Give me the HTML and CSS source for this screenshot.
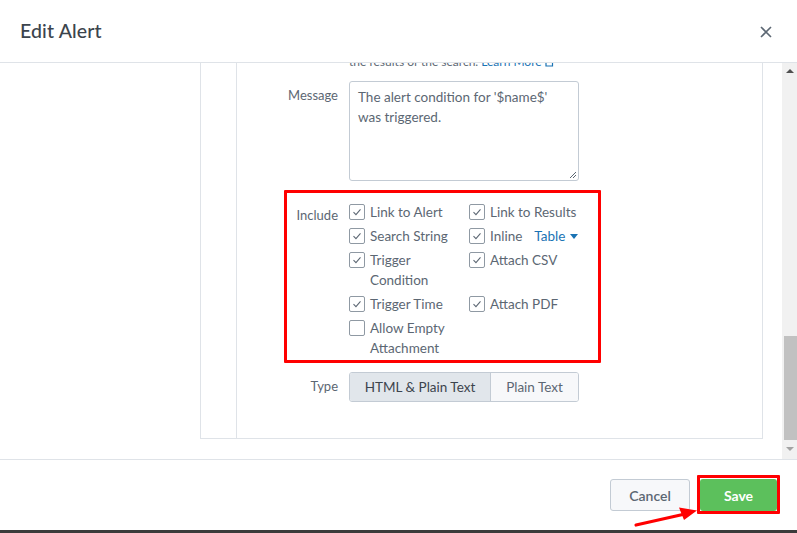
FILE: index.html
```html
<!DOCTYPE html>
<html>
<head>
<meta charset="utf-8">
<link rel="stylesheet" href="styles.css">
</head>
<body>
<div class="modal">
  <header class="header">
    <h1 class="title">Edit Alert</h1>
    <svg class="close" width="12" height="12" viewBox="0 0 12 12"><path d="M1 1 L11 11 M11 1 L1 11" stroke="#5c6773" stroke-width="1.6" fill="none"/></svg>
  </header>
  <div class="body">
    <div class="content">
      <div class="panel">
        <div class="gutter"></div>
        <div class="form">
          <div class="help-row">
            <div class="label"></div>
            <div class="help">the results of the search. <span class="link">Learn More <svg class="ext" width="9" height="9" viewBox="0 0 9 9"><path d="M1 1.5 H7.5 V8 H1 Z" stroke="#1a73b4" stroke-width="1.2" fill="none"/></svg></span></div>
          </div>
          <div class="row msg-row">
            <div class="label msg-label">Message</div>
            <div class="textarea">The alert condition for '$name$' was triggered.<svg class="grip" width="8" height="8" viewBox="0 0 8 8"><path d="M7 1 L1 7 M7 4 L4 7" stroke="#5c6773" stroke-width="1" fill="none"/></svg></div>
          </div>
          <div class="row include-row">
            <div class="annot-box"></div>
            <div class="label inc-label">Include</div>
            <div class="checks">
              <label class="check"><span class="box on"><svg viewBox="0 0 16 16"><path d="M4 8.2 L6.8 11 L12 5" stroke="#5c6773" stroke-width="1.2" fill="none"/></svg></span><span class="ctext">Link to Alert</span></label>
              <label class="check"><span class="box on"><svg viewBox="0 0 16 16"><path d="M4 8.2 L6.8 11 L12 5" stroke="#5c6773" stroke-width="1.2" fill="none"/></svg></span><span class="ctext">Link to Results</span></label>
              <label class="check"><span class="box on"><svg viewBox="0 0 16 16"><path d="M4 8.2 L6.8 11 L12 5" stroke="#5c6773" stroke-width="1.2" fill="none"/></svg></span><span class="ctext">Search String</span></label>
              <label class="check"><span class="box on"><svg viewBox="0 0 16 16"><path d="M4 8.2 L6.8 11 L12 5" stroke="#5c6773" stroke-width="1.2" fill="none"/></svg></span><span class="ctext">Inline</span><span class="table-link">Table <span class="caret"></span></span></label>
              <label class="check"><span class="box on"><svg viewBox="0 0 16 16"><path d="M4 8.2 L6.8 11 L12 5" stroke="#5c6773" stroke-width="1.2" fill="none"/></svg></span><span class="ctext">Trigger<br>Condition</span></label>
              <label class="check"><span class="box on"><svg viewBox="0 0 16 16"><path d="M4 8.2 L6.8 11 L12 5" stroke="#5c6773" stroke-width="1.2" fill="none"/></svg></span><span class="ctext">Attach CSV</span></label>
              <label class="check"><span class="box on"><svg viewBox="0 0 16 16"><path d="M4 8.2 L6.8 11 L12 5" stroke="#5c6773" stroke-width="1.2" fill="none"/></svg></span><span class="ctext">Trigger Time</span></label>
              <label class="check"><span class="box on"><svg viewBox="0 0 16 16"><path d="M4 8.2 L6.8 11 L12 5" stroke="#5c6773" stroke-width="1.2" fill="none"/></svg></span><span class="ctext">Attach PDF</span></label>
              <label class="check"><span class="box"></span><span class="ctext">Allow Empty<br>Attachment</span></label>
            </div>
          </div>
          <div class="row type-row">
            <div class="label type-label">Type</div>
            <div class="btn-group">
              <div class="seg active">HTML &amp; Plain Text</div>
              <div class="seg">Plain Text</div>
            </div>
          </div>
        </div>
      </div>
    </div>
    <div class="scrollbar">
      <div class="arrow up"></div>
      <div class="track"><div class="thumb"></div></div>
      <div class="arrow down"></div>
    </div>
  </div>
  <footer class="footer">
    <button class="btn cancel">Cancel</button>
    <span class="save-wrap">
      <button class="btn save">Save</button>
      <span class="annot-save"></span>
    </span>
    <svg class="annot-arrow" width="80" height="24" viewBox="0 0 80 24"><path d="M3 20 L52 9" stroke="#ff0000" stroke-width="3.2" stroke-linecap="round" fill="none"/><path d="M64 5.5 L46 2.5 L51 15 Z" fill="#ff0000"/></svg>
  </footer>
</div>
</body>
</html>
```

FILE: styles.css
```css
* { box-sizing: border-box; }
html, body { margin: 0; padding: 0; background: #fff; }
body {
  font-family: Lato, "Open Sans", sans-serif;
  color: #5c6773;
  font-size: 13px;
}
.modal {
  width: 797px;
  height: 533px;
  display: flex;
  flex-direction: column;
  overflow: hidden;
}
.header {
  height: 63px;
  flex: none;
  border-bottom: 1px solid #dfe3e8;
  display: flex;
  align-items: center;
  justify-content: space-between;
  padding: 0 25px 0 20px;
}
.title {
  margin: 0 0 1px;
  font-size: 19.5px;
  font-weight: 500;
  color: #3c444d;
  letter-spacing: 0.15px;
}
.close { display: block; margin-top: 1px; }
.body {
  height: 396px;
  flex: none;
  display: flex;
}
.content {
  flex: 1;
  overflow: hidden;
  padding: 0 19px 0 200px;
}
.panel {
  display: flex;
  border: 1px solid #dfe3e8;
  border-top: none;
}
.gutter {
  width: 36px;
  flex: none;
  border-right: 1px solid #dfe3e8;
}
.form {
  flex: 1;
  margin-top: -9px;
  padding-bottom: 36px;
}
.row, .help-row { display: flex; position: relative; }
.label {
  width: 101px;
  flex: none;
  margin-right: 11px;
  text-align: right;
  line-height: 20px;
}
.help {
  font-size: 12px;
  line-height: 16px;
  color: #5c6773;
}
.link { color: #1a73b4; }
.ext { display: inline-block; vertical-align: -1px; }
.msg-row { margin-top: 11px; }
.msg-label { padding-top: 4px; }
.textarea {
  position: relative;
  width: 230px;
  height: 100px;
  border: 1px solid #c3cbd4;
  border-radius: 3px;
  padding: 5px 10px 0 8px;
  line-height: 20px;
  font-size: 13.5px;
  color: #5c6773;
}
.grip { position: absolute; right: 1px; bottom: 1px; }
.include-row { margin-top: 21px; }
.inc-label { padding-top: 3px; }
.annot-box {
  position: absolute;
  top: -12px;
  left: 47px;
  width: 317px;
  height: 173px;
  border: 3.5px solid #ff0000;
  border-radius: 1px;
}
.checks {
  display: grid;
  grid-template-columns: 120px auto;
  row-gap: 4px;
}
.check {
  display: flex;
  align-items: flex-start;
  line-height: 20px;
  font-size: 13.5px;
  color: #5c6773;
}
.box {
  width: 16px;
  height: 16px;
  flex: none;
  margin-top: 2px;
  margin-right: 5px;
  border: 1px solid #8f99a3;
  border-radius: 2px;
  background: #fff;
}
.box svg { display: block; width: 14px; height: 14px; }
.table-link {
  color: #1a73b4;
  margin-left: 12px;
  display: inline-flex;
  align-items: center;
}
.caret {
  display: inline-block;
  margin-left: 5px;
  margin-top: 1px;
  width: 0;
  height: 0;
  border-left: 4px solid transparent;
  border-right: 4px solid transparent;
  border-top: 5px solid #1a73b4;
}
.type-row { margin-top: 14px; }
.type-label { padding-top: 4px; }
.btn-group {
  display: flex;
  height: 30px;
  width: 230px;
  border: 1px solid #c3cbd4;
  border-radius: 3px;
  overflow: hidden;
}
.seg {
  display: flex;
  align-items: center;
  justify-content: center;
  font-size: 13.5px;
  color: #5c6773;
  background: #f7f8fa;
}
.seg.active {
  width: 141px;
  background: #e1e6eb;
  border-right: 1px solid #c3cbd4;
  color: #3c444d;
}
.seg:last-child { flex: 1; }
.scrollbar {
  width: 15px;
  flex: none;
  background: #f1f1f1;
  display: flex;
  flex-direction: column;
  align-items: center;
}
.arrow {
  width: 0;
  height: 0;
  border-left: 4px solid transparent;
  border-right: 4px solid transparent;
  flex: none;
}
.arrow.up { border-bottom: 4px solid #505050; margin-top: 6px; }
.arrow.down { border-top: 4px solid #a3a3a3; margin-bottom: 8px; }
.track {
  flex: 1;
  width: 100%;
  position: relative;
  display: flex;
  flex-direction: column;
  justify-content: flex-end;
  padding: 0 0 7px 2px;
}
.thumb {
  height: 104px;
  background: #c1c1c1;
}
.footer {
  position: relative;
  flex: 1;
  border-top: 1px solid #dfe3e8;
  border-bottom: 3px solid #3b3b3b;
  display: flex;
  justify-content: flex-end;
  align-items: flex-start;
  padding: 19px 20px 0 0;
}
.btn {
  font-family: inherit;
  font-size: 14px;
  font-weight: 700;
  height: 32px;
  border-radius: 3px;
  cursor: pointer;
}
.cancel {
  width: 80px;
  background: #f7f8fa;
  border: 1px solid #c3cbd4;
  color: #5c6773;
  font-weight: 600;
}
.save-wrap {
  position: relative;
  margin-left: 10px;
}
.save {
  display: block;
  width: 77px;
  background: #5cc05c;
  border: none;
  color: #fff;
}
.annot-save {
  position: absolute;
  top: -4px;
  left: -3px;
  right: -3px;
  bottom: -3px;
  border: 3px solid #ff0000;
  border-radius: 1px;
}
.annot-arrow {
  position: absolute;
  left: 633px;
  top: 45px;
}
```
